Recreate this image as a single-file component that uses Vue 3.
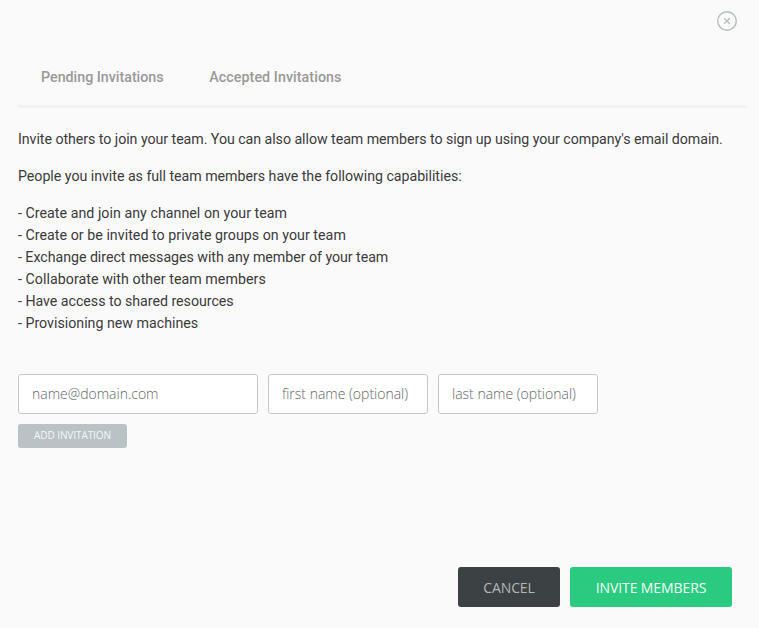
<script setup>
import { ref } from 'vue'

const tabs = ['Pending Invitations', 'Accepted Invitations']
const capabilities = [
  'Create and join any channel on your team',
  'Create or be invited to private groups on your team',
  'Exchange direct messages with any member of your team',
  'Collaborate with other team members',
  'Have access to shared resources',
  'Provisioning new machines',
]
const email = ref('')
const firstName = ref('')
const lastName = ref('')
</script>

<template>
  <main class="modal">
    <header class="top">
      <button class="close" aria-label="Close">
        <svg width="22" height="22" viewBox="0 0 22 22" fill="none" stroke="#b4bdbf">
          <circle cx="11" cy="11" r="9.3" stroke-width="1.4" />
          <path d="M8.2 8.2l5.6 5.6M13.8 8.2l-5.6 5.6" stroke-width="1.3" />
        </svg>
      </button>
    </header>
    <nav class="tabs">
      <div class="tab-list">
        <a v-for="tab in tabs" :key="tab" class="tab">{{ tab }}</a>
      </div>
    </nav>
    <section class="copy">
      <p class="intro">Invite others to join your team. You can also allow team members to sign up using your company's email domain.</p>
      <p>People you invite as full team members have the following capabilities:</p>
      <ul>
        <li v-for="item in capabilities" :key="item">- {{ item }}</li>
      </ul>
    </section>
    <form class="fields" @submit.prevent>
      <input v-model="email" class="field email" placeholder="name@domain.com" />
      <input v-model="firstName" class="field" placeholder="first name (optional)" />
      <input v-model="lastName" class="field" placeholder="last name (optional)" />
    </form>
    <button class="add">ADD INVITATION</button>
    <footer class="actions">
      <button class="action cancel">CANCEL</button>
      <button class="action invite">INVITE MEMBERS</button>
    </footer>
  </main>
</template>

<style>
body {
  margin: 0;
  background: #fafafa;
}
</style>

<style scoped>
.modal {
  box-sizing: border-box;
  width: 759px;
  height: 628px;
  padding: 0 12px 21px 18px;
  display: flex;
  flex-direction: column;
  background: #fafafa;
  color: #3b3b3b;
  font-family: Roboto, sans-serif;
  font-size: 15px;
  line-height: 22px;
  overflow: hidden;
}
button {
  margin: 0;
  border: 0;
  font-family: "Open Sans", sans-serif;
}
.top {
  height: 48px;
  display: flex;
  justify-content: flex-end;
  padding: 10px 9px 0 0;
  box-sizing: border-box;
}
.close {
  width: 22px;
  height: 22px;
  padding: 0;
  background: none;
}
.close svg {
  display: block;
}
.tabs {
  box-sizing: border-box;
  height: 60px;
  padding: 18px 23px 0;
  border-bottom: 3px solid #f1f1f1;
}
.tab-list {
  display: flex;
  gap: 48px;
  transform: scaleX(0.95);
  transform-origin: left;
}
.tab {
  color: #999;
  font-weight: 500;
  white-space: nowrap;
}
.tab:last-child {
  letter-spacing: 0.08px;
}
.copy {
  padding-top: 20px;
  white-space: nowrap;
  transform: scaleX(0.947);
  transform-origin: left;
}
p {
  margin: 0 0 15px;
  letter-spacing: -0.03px;
}
.intro {
  letter-spacing: -0.052px;
}
ul {
  margin: 0;
  padding: 0;
  list-style: none;
}
li:nth-child(-n + 2) {
  letter-spacing: 0.04px;
}
li:nth-child(3) {
  letter-spacing: -0.04px;
}
li:nth-child(4) {
  letter-spacing: 0.05px;
}
li:nth-child(5) {
  letter-spacing: -0.03px;
}
.fields {
  display: flex;
  gap: 10px;
  margin-top: 40px;
}
.field {
  box-sizing: border-box;
  width: 160px;
  height: 40px;
  padding: 0 13px 2px;
  border: 1px solid #c5c8c9;
  border-radius: 3px;
  background: #fff;
  font: 300 14px "Open Sans", sans-serif;
  outline: none;
}
.email {
  width: 240px;
}
.field::placeholder {
  color: #5f686a;
  opacity: 1;
}
.add {
  width: 109px;
  height: 24px;
  margin-top: 10px;
  padding: 0 0 2px;
  border-radius: 3px;
  background: #b9c3c6;
  color: #f4f6f6;
  font-size: 10px;
  letter-spacing: -0.07px;
}
.actions {
  margin-top: auto;
  padding-right: 15px;
  display: flex;
  justify-content: flex-end;
  gap: 10px;
}
.action {
  width: 102px;
  height: 40px;
  padding: 1px 0 0;
  border-radius: 3px;
  background: #3c4144;
  color: #b4b7b8;
  font-size: 14px;
  font-weight: 400;
  letter-spacing: -0.1px;
}
.invite {
  width: 162px;
  background: #2acb80;
  color: #f4fcf8;
}
</style>
